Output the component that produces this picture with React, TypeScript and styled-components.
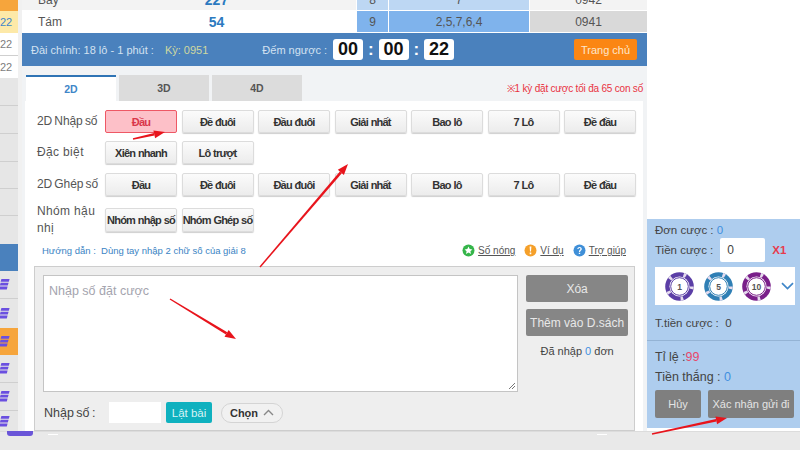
import React from 'react';
import styled, { createGlobalStyle } from 'styled-components';

const Global = createGlobalStyle`
  html, body { margin: 0; padding: 0; background: #fff; }
  * { box-sizing: border-box; }
  body { font-family: "Liberation Sans", Arial, sans-serif; color: #444; }
`;

const Page = styled.div`
  position: relative;
  width: 800px;
  height: 450px;
  overflow: hidden;
  display: flex;
  flex-direction: column;
  background: #fff;
`;
const Body = styled.div`
  display: flex;
  height: 431px;
`;

const Sidebar = styled.div`
  width: 22px;
  flex: none;
  background: #f1f1f1;
  border-right: 4px solid #f1f1f1;
  display: flex;
  flex-direction: column;
`;
const SideRow = styled.div<{ $bg: string; $h: number; $line?: boolean }>`
  height: ${p => p.$h}px;
  flex: none;
  background: ${p => p.$bg};
  border-bottom: ${p => (p.$line ? '1px solid #cfcfcf' : 'none')};
  display: flex;
  align-items: center;
  font-size: 11px;
  color: #777;
  overflow: hidden;
`;
const SideNum = styled.span<{ $blue?: boolean }>`
  color: ${p => (p.$blue ? '#3f86c8' : '#7d7d7d')};
`;

const Main = styled.div`
  width: 625px;
  flex: none;
  background: #f1f3f5;
  display: flex;
  flex-direction: column;
`;

const Table = styled.div`
  margin-top: -11px;
  display: flex;
  flex-direction: column;
`;
const TRow = styled.div<{ $alt?: boolean }>`
  display: grid;
  grid-template-columns: 55px 279px 32px 141px 118px;
  height: 22px;
  background: ${p => (p.$alt ? '#f3f3f3' : '#fff')};
  font-size: 12px;
  color: #555;
  border-bottom: 1px solid #fff;
`;
const TCell = styled.div<{ $bg?: string; $left?: boolean; $strong?: boolean }>`
  display: flex;
  align-items: center;
  justify-content: ${p => (p.$left ? 'flex-start' : 'center')};
  padding-left: ${p => (p.$left ? '16px' : '0')};
  background: ${p => p.$bg || 'transparent'};
  border-left: ${p => (p.$bg ? '1px solid #fff' : 'none')};
  color: ${p => (p.$strong ? '#2c7ac0' : '#555')};
  font-weight: ${p => (p.$strong ? 700 : 400)};
  font-size: ${p => (p.$strong ? '14px' : '12px')};
`;

const InfoBar = styled.div`
  height: 33px;
  background: #4a81bd;
  display: flex;
  align-items: center;
  padding-left: 9px;
  padding-right: 10px;
  font-size: 11px;
`;
const InfoText = styled.span<{ $ml?: number; $color?: string }>`
  margin-left: ${p => p.$ml || 0}px;
  color: ${p => p.$color || '#d3e2f1'};
  white-space: nowrap;
`;
const ClockGroup = styled.div`
  margin-left: 6px;
  display: flex;
  align-items: center;
`;
const Clock = styled.div`
  width: 30px;
  height: 21px;
  border-radius: 3px;
  background: #fff;
  color: #111;
  font-size: 18px;
  font-weight: 700;
  display: flex;
  align-items: center;
  justify-content: center;
`;
const Colon = styled.span`
  width: 15.5px;
  text-align: center;
  color: #fff;
  font-size: 17px;
  font-weight: 700;
`;
const HomeBtn = styled.button`
  margin-left: auto;
  width: 63px;
  height: 21px;
  border: none;
  border-radius: 2px;
  background: #fb8613;
  color: #fde7cc;
  font: 11px "Liberation Sans", Arial, sans-serif;
  padding: 0;
`;

const TabLine = styled.div`
  height: 26px;
  margin-top: 9px;
  display: flex;
  gap: 3px;
  padding-left: 4px;
  padding-right: 4px;
`;
const Tab = styled.div<{ $active?: boolean }>`
  width: 90px;
  height: 26px;
  display: flex;
  align-items: center;
  justify-content: center;
  font-size: 10.5px;
  font-weight: 700;
  background: ${p => (p.$active ? '#fff' : '#dcdcdc')};
  color: ${p => (p.$active ? '#3f86c8' : '#555')};
  border-top: ${p => (p.$active ? '2px solid #2f74b5' : 'none')};
`;
const Notice = styled.div`
  margin-left: auto;
  align-self: center;
  font-size: 10px;
  letter-spacing: -0.2px;
  color: #e9323f;
  white-space: nowrap;
`;

const Panel = styled.div`
  margin-left: 3px;
  width: 618px;
  flex: 1;
  background: #fff;
  padding-top: 9px;
  display: flex;
  flex-direction: column;
`;
const BetRow = styled.div<{ $mb: number; $tall?: boolean }>`
  display: flex;
  padding-left: 12px;
  align-items: center;
  height: ${p => (p.$tall ? 25 : 23)}px;
  margin-bottom: ${p => p.$mb}px;
`;
const RowLabel = styled.div<{ $wide?: boolean }>`
  width: 68px;
  flex: none;
  font-size: 12px;
  line-height: 17px;
  color: #555;
  word-spacing: ${p => (p.$wide ? '0' : '-1px')};
  letter-spacing: ${p => (p.$wide ? '0.35px' : '-0.1px')};
`;
const Buttons = styled.div`
  display: flex;
  gap: 4.5px;
`;
const Choice = styled.div<{ $active?: boolean; $tall?: boolean }>`
  width: 72px;
  height: ${p => (p.$tall ? 24 : 23)}px;
  display: flex;
  align-items: center;
  justify-content: center;
  border-radius: 2px;
  font-size: 11px;
  font-weight: 700;
  letter-spacing: -0.8px;
  word-spacing: 0.5px;
  white-space: nowrap;
  color: ${p => (p.$active ? '#d9364a' : '#333')};
  background: ${p => (p.$active ? '#fdc0c8' : 'linear-gradient(#fbfbfb, #ececec)')};
  border: 1px solid ${p => (p.$active ? '#ee5865' : '#dcdcdc')};
  box-shadow: ${p => (p.$active ? 'none' : '0 1px 1px #cfcfcf')};
`;

const GuideLine = styled.div`
  display: flex;
  align-items: center;
  height: 17px;
  padding-left: 17px;
  padding-right: 17px;
  margin-top: 10px;
`;
const Guide = styled.div`
  font-size: 9.5px;
  color: #3b84c4;
`;
const Links = styled.div`
  margin-left: auto;
  display: flex;
  gap: 9px;
`;
const HelpLink = styled.span`
  display: flex;
  align-items: center;
  gap: 3px;
  font-size: 10px;
  color: #555;
  text-decoration: underline;
`;

const Entry = styled.div`
  margin-left: 9px;
  margin-top: 7px;
  width: 601px;
  height: 165px;
  background: #eee;
  border: 1px solid #cdcdcd;
  padding: 8px 6px 0 8px;
  display: flex;
  flex-direction: column;
`;
const EntryTop = styled.div`
  display: flex;
  gap: 8px;
`;
const NumberBox = styled.div`
  position: relative;
  width: 476px;
  height: 117px;
  background: #fff;
  border: 1px solid #c4c4c4;
  padding: 8px 5px;
  font-size: 12.5px;
  color: #a4a4ae;
`;
const Grip = styled.svg`
  position: absolute;
  right: 1px;
  bottom: 1px;
`;
const Actions = styled.div`
  width: 102px;
  display: flex;
  flex-direction: column;
  gap: 7px;
`;
const ActionBtn = styled.button`
  height: 27px;
  border: none;
  border-radius: 2px;
  background: #868686;
  color: #e8e8e8;
  font: 12px "Liberation Sans", Arial, sans-serif;
  padding: 0;
  white-space: nowrap;
`;
const Entered = styled.div`
  text-align: center;
  font-size: 11px;
  color: #444;
  margin-top: 2px;
`;
const Blue = styled.span`
  color: #3f8fe0;
`;
const EntryBottom = styled.div`
  display: flex;
  align-items: center;
  margin-top: 10px;
  padding-left: 1px;
`;
const EntryLabel = styled.div`
  width: 65px;
  font-size: 12.5px;
  color: #444;
  word-spacing: -1px;
`;
const SmallInput = styled.div`
  width: 52px;
  height: 21px;
  background: #fff;
`;
const FlipBtn = styled.button`
  margin-left: 5px;
  width: 46px;
  height: 21px;
  border: none;
  border-radius: 2px;
  background: #0fb1bf;
  color: #d8f3f5;
  font: 11.5px "Liberation Sans", Arial, sans-serif;
  padding: 0;
`;
const PickPill = styled.div`
  margin-left: 9px;
  width: 62px;
  height: 20px;
  border: 1px solid #d4d4d4;
  border-radius: 10px;
  background: #f1f1f1;
  display: flex;
  align-items: center;
  justify-content: center;
  gap: 5px;
  font-size: 11px;
  font-weight: 700;
  color: #333;
`;

const RightCol = styled.div`
  flex: 1;
  display: flex;
  flex-direction: column;
  padding-top: 219px;
`;
const BetPanel = styled.div`
  height: 209px;
  background: #aecdee;
  display: flex;
  flex-direction: column;
  color: #444;
  font-size: 11.5px;
`;
const BetTop = styled.div`
  height: 122px;
  border-bottom: 1px solid #94b3d4;
  padding: 5px 0 0 8px;
`;
const BetLine = styled.div`
  display: flex;
  align-items: center;
  white-space: nowrap;
  margin-bottom: 2px;
`;
const StakeInput = styled.div`
  width: 45px;
  height: 24px;
  background: #fff;
  border-radius: 2px;
  margin-left: 7px;
  padding-left: 7px;
  line-height: 24px;
  color: #444;
  font-size: 12px;
`;
const Mult = styled.span`
  margin-left: 7px;
  color: #e63b4d;
  font-size: 11.5px;
  font-weight: 700;
`;
const Chips = styled.div`
  width: 140px;
  height: 38px;
  margin-top: 5px;
  background: #fff;
  display: flex;
  align-items: center;
  padding-left: 10px;
  gap: 9.5px;
`;
const Total = styled.div`
  margin-top: 12px;
`;
const BetBottom = styled.div`
  padding: 6px 0 0 8px;
  display: flex;
  flex-direction: column;
`;
const OddsLine = styled.div`
  font-size: 12.5px;
  height: 20px;
  line-height: 20px;
`;
const Pink = styled.span`
  color: #e8476a;
`;
const BetActions = styled.div`
  display: flex;
  gap: 7px;
  margin-top: 3px;
`;
const BetBtn = styled.button<{ $w: number }>`
  width: ${p => p.$w}px;
  height: 28px;
  border: none;
  border-radius: 2px;
  background: #7f7f7f;
  color: #e4e4e4;
  font: 11px "Liberation Sans", Arial, sans-serif;
  padding: 0;
  white-space: nowrap;
`;

const BottomBand = styled.div`
  flex: 1;
  background: #e9e9e9;
  border-top: 1px solid #dcdcdc;
`;
const Overlay = styled.svg`
  position: absolute;
  left: 0;
  top: 0;
  pointer-events: none;
`;
const PurpleTab = styled.div`
  position: absolute;
  left: 7px;
  top: 431px;
  width: 26px;
  height: 5px;
  background: #6a55d8;
  border-radius: 0 0 3px 3px;
`;
const WhiteDash = styled.div<{ $x: number }>`
  position: absolute;
  left: ${p => p.$x}px;
  top: 434px;
  width: 10px;
  height: 1px;
  background: #fff;
`;

const LayerIcon = () => (
  <svg width="10" height="13" viewBox="0 0 10 13">
    <path d="M1.4 1 H9.6 L8.8 3.8 H0.6 Z M0.6 4.8 H8.6 L7.8 7.6 H-0.2 Z M-0.2 8.6 H7.6 L6.8 11.6 H-1 Z" fill="#6a4fe0" />
  </svg>
);

const Chip = ({ color, label }: { color: string; label: string }) => (
  <svg width="29" height="29" viewBox="0 0 29 29">
    <circle cx="14.5" cy="14.5" r="14.3" fill={color} />
    <circle cx="14.5" cy="14.5" r="12.2" fill="none" stroke="#e6dcee" strokeWidth="4" strokeDasharray="2.6 12.7" />
    <circle cx="14.5" cy="14.5" r="10" fill="#fff" />
    <circle cx="14.5" cy="14.5" r="8.8" fill="none" stroke={color} strokeWidth="1" />
    <text x="14.5" y="17.5" textAnchor="middle" fontSize="8.5" fontWeight="700" fill="#555" fontFamily="Liberation Sans, sans-serif">
      {label}
    </text>
  </svg>
);

const Ball = ({ color, glyph }: { color: string; glyph: 'star' | 'bang' | 'ask' }) => (
  <svg width="13" height="13" viewBox="0 0 13 13">
    <circle cx="6.5" cy="6.5" r="6" fill={color} />
    {glyph === 'star' && <path d="M6.5 2.6 L7.7 5.1 L10.4 5.4 L8.4 7.2 L9 9.9 L6.5 8.5 L4 9.9 L4.6 7.2 L2.6 5.4 L5.3 5.1 Z" fill="#fff" />}
    {glyph === 'bang' && <path d="M5.6 2.6 H7.4 L7 7.6 H6 Z M5.7 8.6 H7.3 V10.2 H5.7 Z" fill="#fff" />}
    {glyph === 'ask' && <path d="M4.3 5 C4.4 2.2 8.8 2.2 8.8 4.9 C8.8 6.6 7.1 6.5 7.1 7.9 H5.9 C5.9 5.8 7.5 5.9 7.5 4.9 C7.5 3.8 5.6 3.8 5.5 5 Z M5.8 8.7 H7.2 V10.1 H5.8 Z" fill="#fff" />}
  </svg>
);

const sideRows: { bg: string; h: number; line?: boolean; num?: string; blue?: boolean; icon?: boolean }[] = [
  { bg: '#f6a53c', h: 11 },
  { bg: '#fde9a8', h: 22, num: '22', blue: true },
  { bg: '#fff', h: 23, num: '22', line: true },
  { bg: '#fff', h: 22, num: '22' },
  { bg: '#e6e6e6', h: 28, line: true },
  { bg: '#e6e6e6', h: 28, line: true },
  { bg: '#e6e6e6', h: 28, line: true },
  { bg: '#e6e6e6', h: 27, line: true },
  { bg: '#e6e6e6', h: 27, line: true },
  { bg: '#e6e6e6', h: 28 },
  { bg: '#4a81bd', h: 27 },
  { bg: '#e6e6e6', h: 28, icon: true, line: true },
  { bg: '#e6e6e6', h: 29, icon: true },
  { bg: '#f6a53c', h: 27, icon: true },
  { bg: '#e6e6e6', h: 28, icon: true, line: true },
  { bg: '#e6e6e6', h: 28, icon: true, line: true },
  { bg: '#e6e6e6', h: 20, icon: true },
];

const buyGroup = ['Đầu', 'Đề đuôi', 'Đầu đuôi', 'Giải nhất', 'Bao lô', '7 Lô', 'Đề đầu'];

const Arrow = ({ x1, y1, x2, y2 }: { x1: number; y1: number; x2: number; y2: number }) => {
  const a = Math.atan2(y2 - y1, x2 - x1);
  const bx = x2 - 11 * Math.cos(a);
  const by = y2 - 11 * Math.sin(a);
  const nx = -Math.sin(a);
  const ny = Math.cos(a);
  return (
    <g fill="#e8141c">
      <polygon points={`${x1 + nx * 0.7},${y1 + ny * 0.7} ${x1 - nx * 0.7},${y1 - ny * 0.7} ${bx - nx * 1.3},${by - ny * 1.3} ${bx + nx * 1.3},${by + ny * 1.3}`} />
      <polygon points={`${x2},${y2} ${bx + nx * 4},${by + ny * 4} ${bx - nx * 4},${by - ny * 4}`} />
    </g>
  );
};

export default function App() {
  return (
    <Page>
      <Global />
      <Body>
        <Sidebar>
          {sideRows.map((r, i) => (
            <SideRow key={i} $bg={r.bg} $h={r.h} $line={r.line}>
              {r.num && <SideNum $blue={r.blue}>{r.num}</SideNum>}
              {r.icon && <LayerIcon />}
            </SideRow>
          ))}
        </Sidebar>
        <Main>
          <Table>
            <TRow $alt>
              <TCell $left>Bảy</TCell>
              <TCell $strong>227</TCell>
              <TCell $bg="#bdd7f3">8</TCell>
              <TCell $bg="#bdd7f3">7</TCell>
              <TCell $bg="#f3f3f3">0942</TCell>
            </TRow>
            <TRow>
              <TCell $left>Tám</TCell>
              <TCell $strong>54</TCell>
              <TCell $bg="#7fb3ec">9</TCell>
              <TCell $bg="#7fb3ec">2,5,7,6,4</TCell>
              <TCell $bg="#d9d9d9">0941</TCell>
            </TRow>
          </Table>
          <InfoBar>
            <InfoText>Đài chính: 18 lô - 1 phút :</InfoText>
            <InfoText $ml={11} $color="#cfd8a0">Kỳ: 0951</InfoText>
            <InfoText $ml={54}>Đếm ngược :</InfoText>
            <ClockGroup>
              <Clock>00</Clock>
              <Colon>:</Colon>
              <Clock>00</Clock>
              <Colon>:</Colon>
              <Clock>22</Clock>
            </ClockGroup>
            <HomeBtn>Trang chủ</HomeBtn>
          </InfoBar>
          <TabLine>
            <Tab $active>2D</Tab>
            <Tab>3D</Tab>
            <Tab>4D</Tab>
            <Notice>※1 kỳ đặt cược tối đa 65 con số</Notice>
          </TabLine>
          <Panel>
            <BetRow $mb={8}>
              <RowLabel>2D Nhập số</RowLabel>
              <Buttons>
                {buyGroup.map((t, i) => (
                  <Choice key={t} $active={i === 0}>{t}</Choice>
                ))}
              </Buttons>
            </BetRow>
            <BetRow $mb={9}>
              <RowLabel $wide>Đặc biệt</RowLabel>
              <Buttons>
                <Choice>Xiên nhanh</Choice>
                <Choice>Lô trượt</Choice>
              </Buttons>
            </BetRow>
            <BetRow $mb={11}>
              <RowLabel>2D Ghép số</RowLabel>
              <Buttons>
                {buyGroup.map(t => (
                  <Choice key={t}>{t}</Choice>
                ))}
              </Buttons>
            </BetRow>
            <BetRow $mb={0} $tall>
              <RowLabel $wide>Nhóm hậu nhị</RowLabel>
              <Buttons>
                <Choice $tall>Nhóm nhập số</Choice>
                <Choice $tall>Nhóm Ghép số</Choice>
              </Buttons>
            </BetRow>
            <GuideLine>
              <Guide>Hướng dẫn :&nbsp; Dùng tay nhập 2 chữ số của giải 8</Guide>
              <Links>
                <HelpLink><Ball color="#35b54a" glyph="star" />Số nóng</HelpLink>
                <HelpLink><Ball color="#f5a02a" glyph="bang" />Ví dụ</HelpLink>
                <HelpLink><Ball color="#3f8fd8" glyph="ask" />Trợ giúp</HelpLink>
              </Links>
            </GuideLine>
            <Entry>
              <EntryTop>
                <NumberBox>
                  Nhập số đặt cược
                  <Grip width="8" height="8" viewBox="0 0 8 8">
                    <path d="M7 1 L1 7 M7 4 L4 7" stroke="#777" strokeWidth="1" />
                  </Grip>
                </NumberBox>
                <Actions>
                  <ActionBtn>Xóa</ActionBtn>
                  <ActionBtn>Thêm vào D.sách</ActionBtn>
                  <Entered>Đã nhập <Blue>0</Blue> đơn</Entered>
                </Actions>
              </EntryTop>
              <EntryBottom>
                <EntryLabel>Nhập số :</EntryLabel>
                <SmallInput />
                <FlipBtn>Lật bài</FlipBtn>
                <PickPill>
                  Chọn
                  <svg width="11" height="7" viewBox="0 0 11 7">
                    <path d="M1 6 L5.5 1.5 L10 6" fill="none" stroke="#888" strokeWidth="1.4" />
                  </svg>
                </PickPill>
              </EntryBottom>
            </Entry>
          </Panel>
        </Main>
        <RightCol>
          <BetPanel>
            <BetTop>
              <BetLine>Đơn cược :&nbsp;<Blue>0</Blue></BetLine>
              <BetLine>
                Tiền cược :
                <StakeInput>0</StakeInput>
                <Mult>X1</Mult>
              </BetLine>
              <Chips>
                <Chip color="#5b3ea6" label="1" />
                <Chip color="#2f7fb5" label="5" />
                <Chip color="#7a1f8a" label="10" />
                <svg width="13" height="8" viewBox="0 0 13 8">
                  <path d="M1 1.2 L6.5 6.5 L12 1.2" fill="none" stroke="#3f86c8" strokeWidth="1.7" />
                </svg>
              </Chips>
              <Total>T.tiền cược :&nbsp; 0</Total>
            </BetTop>
            <BetBottom>
              <OddsLine>Tỉ lệ :<Pink>99</Pink></OddsLine>
              <OddsLine>Tiền thắng :&nbsp;<Blue>0</Blue></OddsLine>
              <BetActions>
                <BetBtn $w={46}>Hủy</BetBtn>
                <BetBtn $w={86}>Xác nhận gửi đi</BetBtn>
              </BetActions>
            </BetBottom>
          </BetPanel>
        </RightCol>
      </Body>
      <BottomBand />
      <PurpleTab />
      <WhiteDash $x={48} />
      <WhiteDash $x={597} />
      <Overlay width="800" height="450" viewBox="0 0 800 450">
        <Arrow x1={133} y1={139} x2={165} y2={132} />
        <Arrow x1={260} y1={267} x2={348} y2={164} />
        <Arrow x1={170} y1={299} x2={236} y2={339} />
        <Arrow x1={652} y1={434} x2={727} y2={418} />
      </Overlay>
    </Page>
  );
}
